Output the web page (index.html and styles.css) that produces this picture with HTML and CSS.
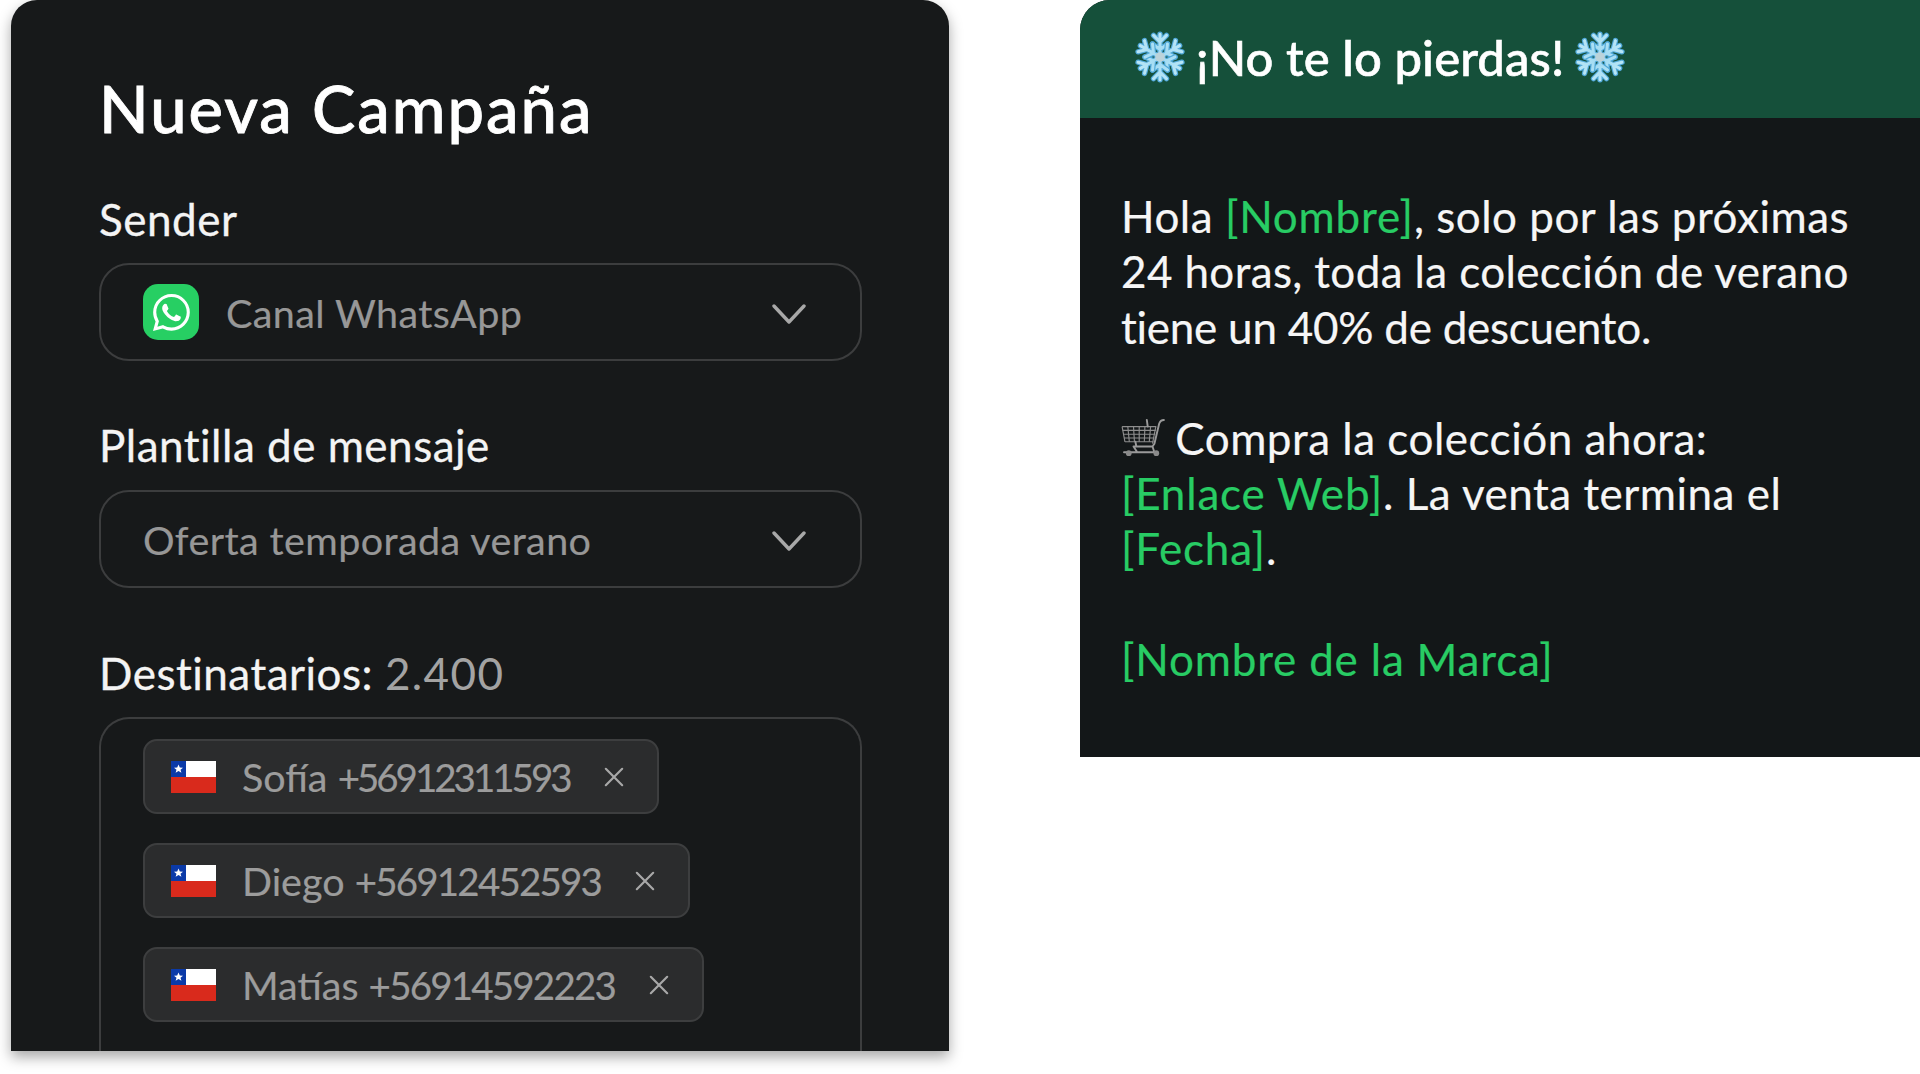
FILE: index.html
```html
<!DOCTYPE html>
<html lang="es">
<head>
<meta charset="utf-8">
<title>Nueva Campaña</title>
<link rel="stylesheet" href="styles.css">
</head>
<body>
<svg class="defs" width="0" height="0" aria-hidden="true">
  <defs>
    <linearGradient id="iceGrad" x1="0" y1="0" x2="0" y2="1">
      <stop offset="0" stop-color="#b9e6f6"/>
      <stop offset="1" stop-color="#9bd8f2"/>
    </linearGradient>
    <g id="flakeArm">
      <path d="M25 25V4M25 11l-6-6M25 11l6-6M25 18l-7-5M25 18l7-5" fill="none" stroke="#4fa8d8" stroke-width="5" stroke-linecap="round"/>
      <path d="M25 25V4M25 11l-6-6M25 11l6-6M25 18l-7-5M25 18l7-5" fill="none" stroke="url(#iceGrad)" stroke-width="2.8" stroke-linecap="round"/>
    </g>
    <symbol id="flake" viewBox="0 0 50 50">
      <use href="#flakeArm"/>
      <use href="#flakeArm" transform="rotate(60 25 25)"/>
      <use href="#flakeArm" transform="rotate(120 25 25)"/>
      <use href="#flakeArm" transform="rotate(180 25 25)"/>
      <use href="#flakeArm" transform="rotate(240 25 25)"/>
      <use href="#flakeArm" transform="rotate(300 25 25)"/>
      <circle cx="25" cy="25" r="4.5" fill="#bcd3da"/>
    </symbol>
    <symbol id="flag" viewBox="0 0 45 32">
      <rect width="45" height="16" fill="#fff"/>
      <rect y="16" width="45" height="16" fill="#d92a1c"/>
      <rect width="15" height="16" fill="#0b3aa8"/>
      <path d="M7.5 3.5l1.3 3 3.2.2-2.5 2 .9 3.1-2.9-1.7-2.9 1.7.9-3.1-2.5-2 3.2-.2z" fill="#fff"/>
    </symbol>
    <symbol id="chev" viewBox="0 0 34 22">
      <path d="M2 3l15 16L32 3" fill="none" stroke="#a8a8a8" stroke-width="3.4" stroke-linecap="round" stroke-linejoin="round"/>
    </symbol>
    <symbol id="close" viewBox="0 0 22 22">
      <path d="M2 2l18 18M20 2L2 20" fill="none" stroke="#a8a8a8" stroke-width="2.4" stroke-linecap="round"/>
    </symbol>
  </defs>
</svg>
<main class="stage">
  <section class="campaign">
    <h1 class="campaign-title">Nueva Campaña</h1>

    <div class="field-label label-sender">Sender</div>
    <div class="select">
      <span class="wa-icon">
        <svg viewBox="0 0 16 16" width="37" height="37"><path fill="#fff" d="M13.601 2.326A7.854 7.854 0 0 0 7.994 0C3.627 0 .068 3.558.064 7.926c0 1.399.366 2.76 1.057 3.965L0 16l4.204-1.102a7.933 7.933 0 0 0 3.79.965h.004c4.368 0 7.926-3.558 7.93-7.93A7.898 7.898 0 0 0 13.6 2.326zM7.994 14.521a6.573 6.573 0 0 1-3.356-.92l-.24-.144-2.494.654.666-2.433-.156-.251a6.56 6.56 0 0 1-1.007-3.505c0-3.626 2.957-6.584 6.591-6.584a6.56 6.56 0 0 1 4.66 1.931 6.557 6.557 0 0 1 1.928 4.66c-.004 3.639-2.961 6.592-6.592 6.592zm3.615-4.934c-.197-.099-1.17-.578-1.353-.646-.182-.065-.315-.099-.445.099-.133.197-.513.646-.627.775-.114.133-.232.148-.43.05-.197-.1-.836-.308-1.592-.985-.59-.525-.985-1.175-1.103-1.372-.114-.198-.011-.304.088-.403.087-.088.197-.232.296-.346.1-.114.133-.198.198-.33.065-.134.034-.248-.015-.347-.05-.099-.445-1.076-.612-1.47-.16-.389-.323-.335-.445-.34-.114-.007-.247-.007-.38-.007a.729.729 0 0 0-.529.247c-.182.198-.691.677-.691 1.654 0 .977.71 1.916.81 2.049.098.133 1.394 2.132 3.383 2.992.47.205.84.326 1.129.418.475.152.904.129 1.246.08.38-.058 1.171-.48 1.338-.943.164-.464.164-.86.114-.943-.049-.084-.182-.133-.38-.232z"/></svg>
      </span>
      <span class="select-text">Canal WhatsApp</span>
      <svg class="chev"><use href="#chev"/></svg>
    </div>

    <div class="field-label label-template">Plantilla de mensaje</div>
    <div class="select">
      <span class="select-text">Oferta temporada verano</span>
      <svg class="chev"><use href="#chev"/></svg>
    </div>

    <div class="field-label label-recipients">Destinatarios: <span class="count">2.400</span></div>
    <div class="recipients">
      <div class="chip chip-a">
        <svg class="flag"><use href="#flag"/></svg>
        <span class="chip-text">Sofía <span class="phone">+56912311593</span></span>
        <svg class="close"><use href="#close"/></svg>
      </div>
      <div class="chip chip-b">
        <svg class="flag"><use href="#flag"/></svg>
        <span class="chip-text">Diego <span class="phone">+56912452593</span></span>
        <svg class="close"><use href="#close"/></svg>
      </div>
      <div class="chip chip-c">
        <svg class="flag"><use href="#flag"/></svg>
        <span class="chip-text">Matías <span class="phone">+56914592223</span></span>
        <svg class="close"><use href="#close"/></svg>
      </div>
    </div>
  </section>

  <section class="preview">
    <header class="preview-head">
      <svg class="flake"><use href="#flake"/></svg>
      <span class="preview-title">¡No te lo pierdas!</span>
      <svg class="flake"><use href="#flake"/></svg>
    </header>
    <div class="preview-body">
      <p class="msg">Hola <span class="var">[Nombre]</span>, solo por las próximas<br><span class="line-two">24 horas, toda la colección de verano</span><br><span class="line-three">tiene un 40% de descuento.</span></p>
      <p class="msg"><svg class="cart" viewBox="0 0 46 40"><g fill="none" stroke="#8d8d8d" stroke-width="1.2"><path d="M1 8h36M1.5 12h35M2 16h34M3 20h32M4 24h30"/><path d="M1 8l3 16M7 8l1.6 16M13 8l1 16M19 8v16M25 8l-.6 16M31 8l-1.4 16M36.5 8L33 26"/></g><path d="M45 1c-3 0-4 1-5 4l-5 21-2 3H13l4 6M27 1l1 7M16 29l-1-5M33 29l2 6H3" fill="none" stroke="#9a9a9a" stroke-width="2" stroke-linecap="round" stroke-linejoin="round"/><circle cx="8" cy="36" r="3" fill="#8a8a8a"/><circle cx="37" cy="36" r="3" fill="#8a8a8a"/></svg> Compra la colección ahora:<br><span class="var">[Enlace Web]</span>. La venta termina el<br><span class="var">[Fecha]</span>.</p>
      <p class="msg"><span class="var">[Nombre de la Marca]</span></p>
    </div>
  </section>
</main>
</body>
</html>
```

FILE: styles.css
```css
* { box-sizing: border-box; }
html, body { margin: 0; height: 100%; background: #fff; overflow: hidden; }
body { font-family: "Lato", "Liberation Sans", sans-serif; }
.defs { position: absolute; }
.stage { display: flex; align-items: flex-start; height: 1074px; padding-left: 11px; }

.campaign {
  width: 938px; height: 1051px; flex: none; overflow: hidden;
  padding: 0 87px 0 88px;
  background: #17191a;
  border-radius: 26px 26px 0 0;
  box-shadow: 0 6px 14px rgba(0,0,0,.35);
}
.campaign-title {
  margin: 68px 0 0; height: 80px; line-height: 80px;
  font-size: 65px; font-weight: 500; color: #fff; letter-spacing: 2px;
  -webkit-text-stroke: .8px #fff;
}
.field-label { font-size: 44px; line-height: 50px; color: #f4f4f4; height: 50px; letter-spacing: .5px; -webkit-text-stroke: .3px #f4f4f4; }
.label-sender { margin-top: 46px; margin-bottom: 19px; }
.label-template { margin-top: 59px; margin-bottom: 20px; }
.label-recipients { margin-top: 60px; margin-bottom: 19px; }
.count { color: #a3a3a3; letter-spacing: 1.4px; -webkit-text-stroke: 0; }

.select {
  display: flex; align-items: center; height: 98px;
  padding: 0 54px 0 42px;
  border: 2px solid #3c3d3e; border-radius: 30px;
}
.select-text { flex: 1; font-size: 39.5px; letter-spacing: .4px; color: #979797; -webkit-text-stroke: .2px #979797; }
.wa-icon {
  display: flex; align-items: center; justify-content: center;
  width: 56px; height: 56px; margin-right: 27px;
  background: #27cf63; border-radius: 15px;
}
.chev { width: 34px; height: 22px; flex: none; margin-top: 4px; }

.recipients {
  height: 400px; padding: 20px 41px 0 42px;
  border: 2px solid #3c3d3e; border-bottom: 0; border-radius: 30px 30px 0 0;
  display: flex; flex-direction: column; align-items: flex-start; gap: 29px;
}
.chip {
  display: flex; align-items: center; height: 75px; flex: none;
  padding: 0 33px 0 26px;
  background: #2b2c2d; border: 2px solid #3d3e3f; border-radius: 14px;
}
.chip-a { width: 516px; }
.chip-b { width: 547px; }
.chip-c { width: 561px; }
.flag { width: 45px; height: 32px; flex: none; margin-right: 26px; }
.chip-text { flex: 1; font-size: 39.5px; color: #9c9c9c; white-space: nowrap; -webkit-text-stroke: .2px #9c9c9c; }
.phone { font-size: 38.5px; letter-spacing: -1.8px; }
.chip-a .phone { letter-spacing: -3px; }
.close { width: 20px; height: 20px; flex: none; }

.preview { width: 840px; height: 757px; flex: none; margin-left: 131px; background: #131718; border-radius: 30px 0 0 0; overflow: hidden; }
.preview-head {
  display: flex; align-items: center; height: 118px; padding: 0 0 5px 53px;
  background: #15503a; gap: 9px;
}
.preview-title { font-size: 49px; font-weight: 500; color: #fff; letter-spacing: .1px; -webkit-text-stroke: .6px #fff; }
.flake { width: 54px; height: 54px; flex: none; }
.preview-body { padding: 71px 0 0 41px; }
.msg { margin: 0 0 55.4px; font-size: 44px; letter-spacing: .5px; line-height: 55.4px; color: #f6f6f6; white-space: nowrap; -webkit-text-stroke: .2px #f6f6f6; }
.line-two { letter-spacing: .37px; }
.line-three { letter-spacing: -.25px; }
.var { color: #28cc64; letter-spacing: .8px; -webkit-text-stroke: .2px #28cc64; }
.cart { width: 44px; height: 38px; vertical-align: -2px; margin-right: -1.5px; }
```
